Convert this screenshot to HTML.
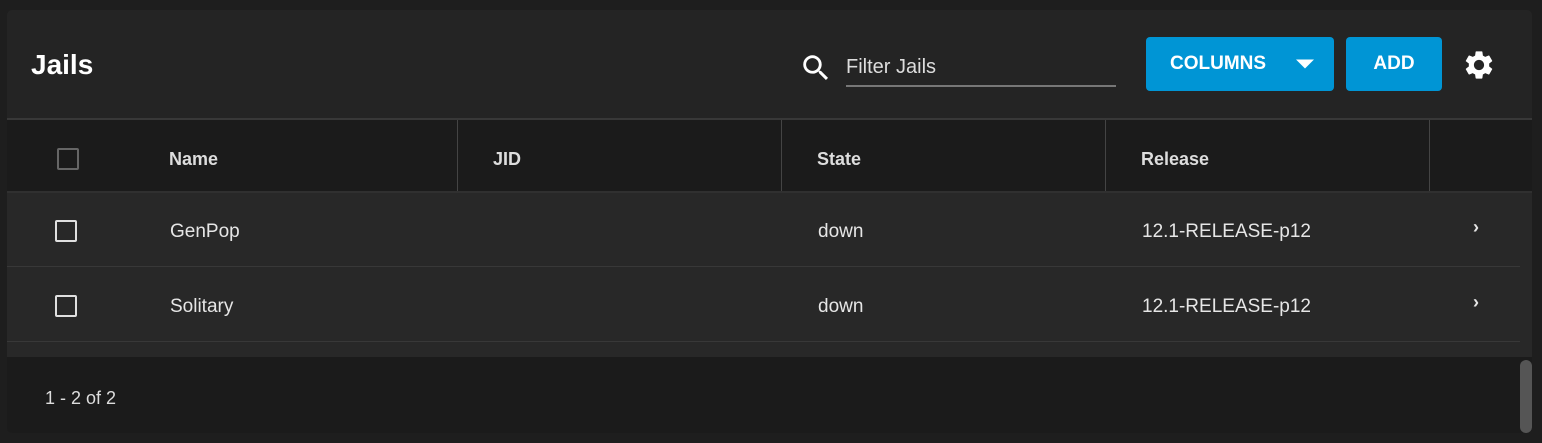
<!DOCTYPE html>
<html><head><style>
*{margin:0;padding:0;box-sizing:border-box}
body{width:1542px;height:443px;background:#1e1e1e;font-family:"Liberation Sans",sans-serif;position:relative;overflow:hidden;color:#e6e6e6}
.card{position:absolute;left:7px;top:10px;width:1525px;height:423px;background:#242424;border-radius:5px;overflow:hidden}
.abs{position:absolute}
.cb{position:absolute;width:22px;height:22px;border:2px solid #e0e0e0;border-radius:2px}
.th{position:absolute;top:138px;font-weight:bold;font-size:18px;color:#ddd}
.td{position:absolute;font-size:19px;color:#e6e6e6}
.btn{position:absolute;background:#0095d5;border-radius:4px;color:#fff;font-weight:bold;font-size:19px;display:flex;align-items:center}
</style></head><body>
<div class="card">
 <div class="abs" style="left:24px;top:39px;font-size:28px;font-weight:bold;color:#fff">Jails</div>
 <svg class="abs" style="left:792px;top:41px" width="34" height="34" viewBox="0 0 24 24"><path fill="#fff" d="M15.5 14h-.79l-.28-.27A6.47 6.47 0 0 0 16 9.5 6.5 6.5 0 1 0 9.5 16c1.61 0 3.09-.59 4.23-1.57l.27.28v.79l5 4.99L20.49 19l-4.99-5zm-6 0C7.01 14 5 11.99 5 9.5S7.01 5 9.5 5 14 7.01 14 9.5 11.99 14 9.5 14z"/></svg>
 <div class="abs" style="left:839px;top:46px;font-size:20px;color:#ddd">Filter Jails</div>
 <div class="abs" style="left:839px;top:75px;width:270px;height:2px;background:#777"></div>
 <div class="btn" style="left:1139px;top:27px;width:188px;height:54px;padding-left:24px">COLUMNS
  <svg class="abs" style="left:150px;top:22px" width="18" height="10" viewBox="0 0 10 5"><path fill="#fff" d="M0 0l5 5 5-5z"/></svg></div>
 <div class="btn" style="left:1339px;top:27px;width:96px;height:54px;justify-content:center">ADD</div>
 <svg class="abs" style="left:1455px;top:38px" width="34" height="34" viewBox="0 0 24 24"><path fill="#fff" d="M19.14 12.94c.04-.3.06-.61.06-.94 0-.32-.02-.64-.07-.94l2.030-1.58a.49.49 0 0 0 .12-.61l-1.92-3.32a.488.488 0 0 0-.59-.22l-2.39.96c-.5-.38-1.03-.7-1.62-.94l-.36-2.54a.484.484 0 0 0-.48-.41h-3.840c-.24 0-.43.17-.47.41l-.36 2.54c-.59.24-1.13.57-1.62.94l-2.39-.96c-.22-.08-.47 0-.59.22L2.74 8.87c-.12.21-.08.47.12.61l2.03 1.58c-.05.3-.09.63-.09.94s.02.64.07.94l-2.03 1.58a.49.49 0 0 0-.12.61l1.92 3.32c.12.22.37.29.59.22l2.39-.96c.5.38 1.03.7 1.62.94l.36 2.54c.05.24.24.41.48.41h3.84c.24 0 .44-.17.47-.41l.36-2.54c.59-.24 1.13-.56 1.62-.94l2.39.96c.22.08.47 0 .59-.22l1.92-3.32c.12-.22.07-.47-.12-.61l-2.01-1.58zM12 15.6c-1.98 0-3.6-1.62-3.6-3.6s1.62-3.6 3.6-3.6 3.6 1.62 3.6 3.6-1.62 3.6-3.6 3.6z"/></svg>
 <div class="abs" style="left:0;top:108px;width:1525px;height:2px;background:#383838"></div>
 <div class="abs" style="left:0;top:110px;width:1525px;height:71px;background:#1b1b1b"></div>
 <div class="abs" style="left:450px;top:110px;width:1px;height:71px;background:#444"></div>
 <div class="abs" style="left:774px;top:110px;width:1px;height:71px;background:#444"></div>
 <div class="abs" style="left:1098px;top:110px;width:1px;height:71px;background:#444"></div>
 <div class="abs" style="left:1422px;top:110px;width:1px;height:71px;background:#444"></div>
 <div class="cb" style="left:50px;top:138px;border-color:#666"></div>
 <div class="th" style="left:162px;top:139px">Name</div>
 <div class="th" style="left:486px;top:139px">JID</div>
 <div class="th" style="left:810px;top:139px">State</div>
 <div class="th" style="left:1134px;top:139px">Release</div>
 <div class="abs" style="left:0;top:181px;width:1525px;height:166px;background:#282828"></div>
 <div class="abs" style="left:0;top:181px;width:1525px;height:2px;background:#303030"></div>
 <div class="abs" style="left:0;top:256px;width:1513px;height:1px;background:#383838"></div>
 <div class="abs" style="left:0;top:331px;width:1513px;height:1px;background:#383838"></div>
 <div class="cb" style="left:48px;top:210px"></div>
 <div class="td" style="left:163px;top:211px">GenPop</div>
 <div class="td" style="left:811px;top:211px">down</div>
 <div class="td" style="left:1135px;top:211px">12.1-RELEASE-p12</div>
 <div class="td" style="left:1466px;top:207px;font-weight:bold;font-size:18px">›</div>
 <div class="cb" style="left:48px;top:285px"></div>
 <div class="td" style="left:163px;top:286px">Solitary</div>
 <div class="td" style="left:811px;top:286px">down</div>
 <div class="td" style="left:1135px;top:286px">12.1-RELEASE-p12</div>
 <div class="td" style="left:1466px;top:282px;font-weight:bold;font-size:18px">›</div>
 <div class="abs" style="left:0;top:347px;width:1525px;height:76px;background:#1b1b1b"></div>
 <div class="abs" style="left:38px;top:378px;font-size:18px;color:#ddd">1 - 2 of 2</div>
 <div class="abs" style="left:1513px;top:350px;width:12px;height:73px;background:#555;border-radius:6px"></div>
</div>
</body></html>
